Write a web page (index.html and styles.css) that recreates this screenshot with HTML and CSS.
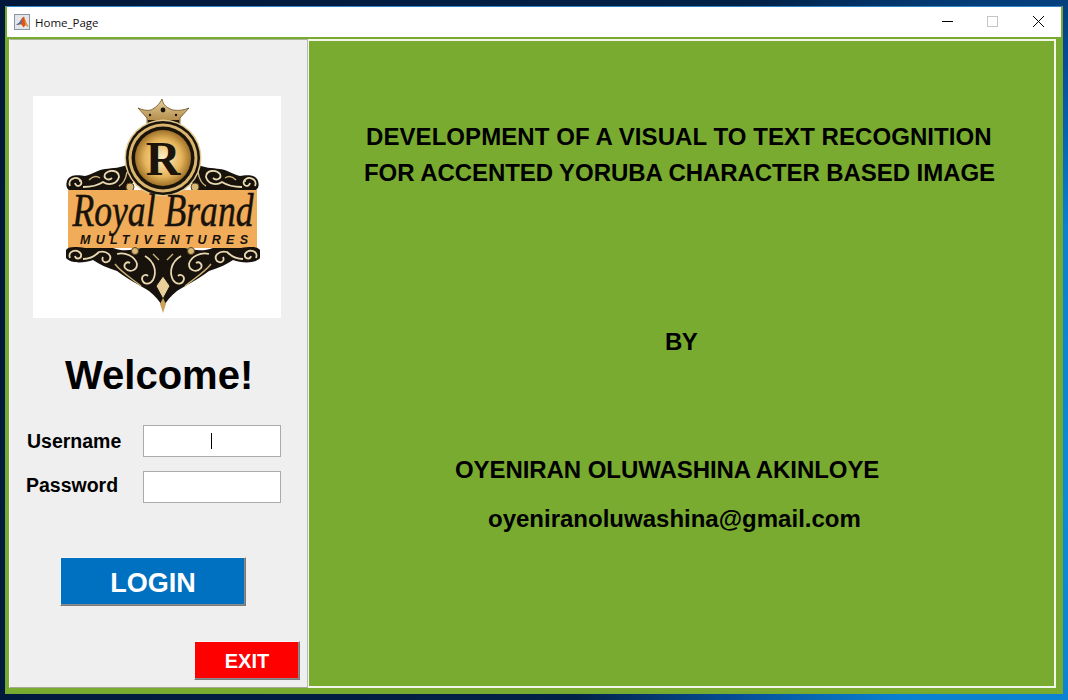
FILE: index.html
```html
<!DOCTYPE html>
<html lang="en">
<head>
<meta charset="utf-8">
<title>Home_Page</title>
<link rel="stylesheet" href="styles.css">
</head>
<body>
<div class="window">
  <header class="titlebar">
    <svg class="app-icon" viewBox="0 0 16 16" width="16" height="16">
      <rect x="0.5" y="0.5" width="15" height="15" fill="#e3e6ea" stroke="#8a93a0"/>
      <path d="M2 11 L5.5 8.5 L8 4 L10 2.5 L12 8 L14.5 13 L11.5 11 L9.5 13.5 L7.5 10.5 L5 10.5 Z" fill="#d9541e"/>
      <path d="M2 11 L5.5 8.5 L7.5 5 L7.5 9 L5 10.5 Z" fill="#3a6fb5"/>
      <path d="M10 2.5 L12 8 L14.5 13 L11.5 11 Z" fill="#eb9a3c"/>
    </svg>
    <span class="title">Home_Page</span>
    <div class="controls">
      <svg class="ctl" viewBox="0 0 46 30" width="46" height="30"><path d="M19 14.5H30" stroke="#000" fill="none"/></svg>
      <svg class="ctl" viewBox="0 0 46 30" width="46" height="30"><rect x="18.5" y="9.5" width="10" height="10" stroke="#c4c4c4" fill="none"/></svg>
      <svg class="ctl" viewBox="0 0 46 30" width="46" height="30"><path d="M18 9L29 20M29 9L18 20" stroke="#000" fill="none"/></svg>
    </div>
  </header>
  <main class="client">
    <aside class="login-panel">
      <svg class="logo" viewBox="0 0 248 222" width="248" height="222">
        <defs>
          <radialGradient id="gold" cx="50%" cy="50%" r="55%">
            <stop offset="0" stop-color="#fdf0c8"/>
            <stop offset="0.6" stop-color="#e6b45a"/>
            <stop offset="1" stop-color="#8a5f1c"/>
          </radialGradient>
          <linearGradient id="band" x1="0" y1="0" x2="0" y2="1">
            <stop offset="0" stop-color="#e6cf9c"/>
            <stop offset="1" stop-color="#a97f3a"/>
          </linearGradient>
          <g id="scroll">
            <path d="M34 85 C36 78 46 79 52 80 C60 78 64 74 72 73 C80 72 88 72 96 68 L102 84 L94 94 L36 94 C33 92 33 88 34 85 Z" fill="#17120c"/>
            <path d="M37 90 C34 83 44 79 48 85 C50 90 43 92 42 87" fill="none" stroke="#e9d8b0" stroke-width="1.8"/>
            <path d="M50 91 C58 91 64 90 70 86 C76 90 84 88 86 81 C86 74 76 73 72 78 C70 83 76 85 79 82" fill="none" stroke="#e9d8b0" stroke-width="1.8"/>
            <path d="M56 84 C60 80 64 80 67 82 M86 90 C90 88 93 82 94 76" fill="none" stroke="#cdb27a" stroke-width="1.5"/>
            <circle cx="47" cy="85" r="1" fill="#e9d8b0"/>
            <circle cx="97" cy="91" r="4" fill="#d8b877" stroke="#5b4318"/>
          </g>
          <g id="lower">
            <path d="M33 154 C36 150 44 151 52 152 L80 152 C90 156 100 154 108 152 L130 152 L130 212 C127 205 122 200 116 195 C108 190 96 184 84 175 C74 172 66 168 60 164 C52 167 38 168 33 162 Z" fill="#17120c"/>
            <path d="M37 162 C34 155 44 152 48 158 C49 163 43 164 42 160" fill="none" stroke="#e9d8b0" stroke-width="1.8"/>
            <path d="M50 163 C56 163 62 160 66 156 C74 154 80 160 76 165 C72 168 68 165 70 161" fill="none" stroke="#e9d8b0" stroke-width="1.8"/>
            <path d="M84 158 C92 156 102 160 104 168 C104 175 96 177 92 172 C90 168 94 165 97 167" fill="none" stroke="#e9d8b0" stroke-width="1.8"/>
            <path d="M112 160 C122 166 124 176 120 184 C116 190 110 188 109 183 C109 179 113 178 115 180" fill="none" stroke="#e9d8b0" stroke-width="1.8"/>
            <path d="M82 168 C88 176 98 182 108 190 M120 158 L126 164" fill="none" stroke="#cdb27a" stroke-width="1.4"/>
            <circle cx="102" cy="155" r="3.5" fill="#d8b877" stroke="#5b4318"/>
          </g>
        </defs>
        <rect width="248" height="222" fill="#fff"/>
        <path d="M105 12 C110 14 114 15 118 14 C122 12 126 9 129 3 C130 9 134 12 140 14 C146 15 151 14 156 12 L147 22 L147 29 L114 29 L114 22 Z" fill="url(#band)" stroke="#6b5120" stroke-width="0.8"/>
        <path d="M115 24H146V30H115Z" fill="#2a1c08"/>
        <circle cx="130" cy="14" r="2.4" fill="#17120c"/>
        <circle cx="117" cy="19" r="1.2" fill="#17120c"/>
        <circle cx="143" cy="19" r="1.2" fill="#17120c"/>
        <use href="#scroll"/>
        <use href="#scroll" transform="matrix(-1 0 0 1 259 0)"/>
        <rect x="35" y="94" width="189" height="58" fill="#f0ac58"/>
        <use href="#lower"/>
        <use href="#lower" transform="matrix(-1 0 0 1 260 0)"/>
        <path d="M130 180 L137 190 L130 203 L123 190 Z" fill="#e9d09a" stroke="#17120c"/>
        <path d="M130 202 L133 208 L130 217 L127 208 Z" fill="#c9a45c"/>
        <circle cx="130" cy="62" r="38.5" fill="#e3c98f"/>
        <circle cx="130" cy="62" r="37" fill="#1b140a"/>
        <circle cx="130" cy="62" r="34.5" fill="#d9b56e"/>
        <circle cx="130" cy="62" r="31.5" fill="#1b140a"/>
        <circle cx="130" cy="62" r="28" fill="url(#gold)"/>
        <text class="logo-r" x="130" y="79" text-anchor="middle">R</text>
        <text class="logo-script" x="130" y="130" text-anchor="middle" textLength="181" lengthAdjust="spacingAndGlyphs">Royal Brand</text>
        <text class="logo-sub" x="131" y="148" text-anchor="middle" textLength="168">MULTIVENTURES</text>
      </svg>
      <h1 class="welcome">Welcome!</h1>
      <div class="field field-user">
        <label class="field-label">Username</label>
        <div class="input"><span class="caret"></span></div>
      </div>
      <div class="field field-pass">
        <label class="field-label">Password</label>
        <div class="input"></div>
      </div>
      <button class="btn btn-login">LOGIN</button>
      <button class="btn btn-exit">EXIT</button>
    </aside>
    <section class="info-panel">
      <p class="heading line-title">DEVELOPMENT OF A VISUAL TO TEXT RECOGNITION</p>
      <p class="heading line-title2">FOR ACCENTED YORUBA CHARACTER BASED IMAGE</p>
      <p class="heading line-by">BY</p>
      <p class="heading line-name">OYENIRAN OLUWASHINA AKINLOYE</p>
      <p class="heading line-mail">oyeniranoluwashina@gmail.com</p>
    </section>
  </main>
</div>
</body>
</html>
```

FILE: styles.css
```css
* { box-sizing: border-box; }
html, body { margin: 0; height: 100%; }
body {
  width: 1068px;
  height: 700px;
  overflow: hidden;
  padding: 6px 5px 6px 5px;
  background:
    radial-gradient(ellipse 520px 620px at 100% 72%, #0b8ad8 0%, #0a80d0 45%, rgba(6, 80, 155, 0.9) 72%, rgba(2, 39, 79, 0) 100%),
    linear-gradient(100deg, #01183a 0%, #02274f 100%);
  font-family: "Liberation Sans", Arial, sans-serif;
}
.window {
  width: 1058px;
  height: 688px;
  display: flex;
  flex-direction: column;
  border: 2px solid #76a92f;
  border-top: 1px solid #2f86c9;
  background: #78ab30;
}
.titlebar {
  height: 30px;
  flex: none;
  background: #fff;
  display: flex;
  align-items: center;
  padding-left: 7px;
}
.app-icon { flex: none; }
.title {
  margin-left: 5px;
  font: 11.5px "Open Sans", sans-serif;
  color: #111;
}
.controls { margin-left: auto; display: flex; }
.ctl { display: block; }
.client {
  flex: 1;
  display: flex;
  padding: 2px 5px 4px 2px;
  min-height: 0;
}
.login-panel {
  width: 299px;
  flex: none;
  background: #efefef;
  border: 1px solid #fff;
  border-top-color: #a9b49a;
  border-right-color: #b8b8b8;
  border-bottom-color: #a8a898;
  padding-top: 56px;
  display: flex;
  flex-direction: column;
  align-items: flex-start;
}
.logo { display: block; margin-left: 23px; flex: none; }
.logo-r { font: bold 48px "Liberation Serif", serif; fill: #1b140a; }
.logo-script { font: italic 46px "Liberation Serif", serif; fill: #17120c; stroke: #17120c; stroke-width: 0.5px; }
.logo-sub { font: italic bold 12.5px "Liberation Sans", sans-serif; fill: #17120c; }
.welcome {
  margin: 33px 0 0 55px;
  font-size: 40px;
  line-height: 48px;
  font-weight: 700;
  color: #000;
}
.field { display: flex; align-items: center; height: 32px; }
.field-user { margin-top: 26px; }
.field-pass { margin-top: 14px; }
.field-label { font-size: 19.5px; font-weight: 700; color: #000; width: 116px; }
.field-user .field-label { margin-left: 17px; }
.field-pass .field-label { margin-left: 16px; width: 117px; position: relative; top: -2px; }
.input {
  width: 138px;
  height: 32px;
  background: #fff;
  border: 1px solid #ababab;
  display: flex;
  align-items: center;
  justify-content: center;
}
.caret { width: 1px; height: 16px; background: #000; margin-right: 2px; }
.btn {
  display: block;
  padding: 0;
  font-family: inherit;
  font-weight: 700;
  color: #fff;
  border: 1px solid;
  border-color: #f5f5f5 #7b7b7b #7b7b7b #f5f5f5;
  box-shadow: inset -1px -1px 0 #8a8a8a;
  cursor: pointer;
}
.btn-login {
  margin: 54px 0 0 50px;
  width: 186px;
  height: 49px;
  padding-top: 4px;
  background: #0070c0;
  font-size: 27px;
}
.btn-exit {
  margin: 35px 0 0 184px;
  width: 106px;
  height: 39px;
  padding-top: 2px;
  background: #ff0000;
  font-size: 20px;
}
.info-panel {
  flex: 1;
  background: #78ab30;
  border: 1px solid #f2f5ea;
  border-right-width: 2px;
  border-bottom-width: 2px;
  border-top-width: 2px;
  padding-top: 82px;
  min-width: 0;
}
.heading {
  margin: 0;
  color: #000;
  font-size: 24px;
  line-height: 28px;
  font-weight: 700;
  white-space: nowrap;
}
.line-title { margin-left: 57px; letter-spacing: 0.07px; }
.line-title2 { margin-left: 55px; margin-top: 8px; letter-spacing: -0.07px; }
.line-by { margin-left: 356px; margin-top: 141px; letter-spacing: -0.5px; }
.line-name { margin-left: 146px; margin-top: 100px; letter-spacing: -0.07px; }
.line-mail { margin-left: 179px; margin-top: 21px; }
```
